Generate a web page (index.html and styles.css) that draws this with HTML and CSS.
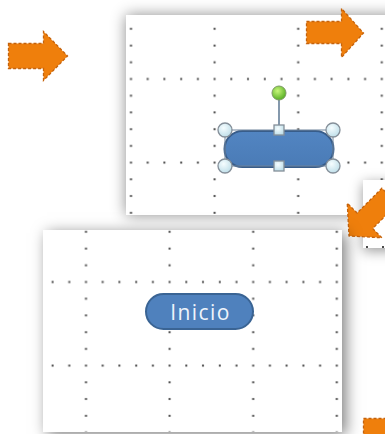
FILE: index.html
```html
<!DOCTYPE html>
<html lang="es">
<head>
    <meta charset="UTF-8">
    <meta name="viewport" content="width=device-width, initial-scale=1.0">
    <title>Diapositivas - Inicio</title>
    <link rel="stylesheet" href="styles.css">
</head>
<body>
    <div class="canvas">
        <!-- flecha izquierda -->
        <svg class="arrow arrow-left" width="62" height="52" viewBox="-1.5 -1.5 62 52">
            <path class="arrow-shape" d="M0 12 H35 V0 L59 24.5 L35 49 V37 H0 Z"/>
        </svg>

        <!-- diapositiva 1: forma seleccionada -->
        <div class="slide slide-top">
            <svg class="grid" width="100%" height="100%">
                <defs>
                    <pattern id="dots1" patternUnits="userSpaceOnUse" width="83.6" height="83.6" x="3.5" y="62.5">
                        <rect class="pt" x="0.5" y="0.5" width="2" height="2"/>
                        <rect class="pt" x="0.5" y="17.2" width="2" height="2"/>
                        <rect class="pt" x="0.5" y="33.9" width="2" height="2"/>
                        <rect class="pt" x="0.5" y="50.7" width="2" height="2"/>
                        <rect class="pt" x="0.5" y="67.4" width="2" height="2"/>
                        <rect class="pt" x="17.2" y="0.5" width="2" height="2"/>
                        <rect class="pt" x="33.9" y="0.5" width="2" height="2"/>
                        <rect class="pt" x="50.7" y="0.5" width="2" height="2"/>
                        <rect class="pt" x="67.4" y="0.5" width="2" height="2"/>
                    </pattern>
                    <radialGradient id="handle" cx="40%" cy="35%" r="70%">
                        <stop offset="0" stop-color="#f6fdff"/>
                        <stop offset="1" stop-color="#bcdde8"/>
                    </radialGradient>
                    <radialGradient id="rotate" cx="40%" cy="35%" r="70%">
                        <stop offset="0" stop-color="#c8f77a"/>
                        <stop offset="1" stop-color="#4faa1e"/>
                    </radialGradient>
                    <linearGradient id="pillFill" x1="0" y1="0" x2="0" y2="1">
                        <stop offset="0" stop-color="#5285c2"/>
                        <stop offset="1" stop-color="#4a7bb6"/>
                    </linearGradient>
                </defs>
                <rect width="100%" height="100%" fill="url(#dots1)"/>
            </svg>

            <svg class="selection" width="135" height="90" viewBox="0 0 135 90">
                <rect class="pill" x="14.5" y="46" width="109" height="36" rx="18"/>
                <rect class="frame" x="15" y="45" width="108" height="36"/>
                <line class="stem" x1="69" y1="15" x2="69" y2="41"/>
                <circle class="rot-handle" cx="69" cy="8" r="7"/>
                <circle class="handle" cx="15" cy="45" r="7"/>
                <circle class="handle" cx="123" cy="45" r="7"/>
                <circle class="handle" cx="15" cy="81" r="7"/>
                <circle class="handle" cx="123" cy="81" r="7"/>
                <rect class="handle" x="64" y="40" width="10" height="10"/>
                <rect class="handle" x="64" y="76" width="10" height="10"/>
            </svg>
        </div>

        <!-- diapositiva 3 (detrás) -->
        <div class="slide slide-back">
            <span class="dot dot-a"></span>
            <span class="dot dot-b"></span>
        </div>

        <svg class="arrow arrow-top" width="60" height="52" viewBox="-1.5 -1.5 60 52">
            <path class="arrow-shape" d="M0 13 H35 V0 L57 24.5 L35 49 V35 H0 Z"/>
        </svg>

        <svg class="arrow arrow-diag" width="60" height="80" viewBox="0 0 60 80">
            <path class="arrow-shape" transform="translate(4 50) rotate(135) translate(-57 -24.5)" d="M0 13 H35 V0 L57 24.5 L35 49 V35 H0 Z"/>
        </svg>

        <!-- diapositiva 2: resultado -->
        <div class="slide slide-bottom">
            <svg class="grid" width="100%" height="100%">
                <defs>
                    <pattern id="dots2" patternUnits="userSpaceOnUse" width="83.6" height="83.6" x="41.5" y="50.5">
                        <rect class="pt" x="0.5" y="0.5" width="2" height="2"/>
                        <rect class="pt" x="0.5" y="17.2" width="2" height="2"/>
                        <rect class="pt" x="0.5" y="33.9" width="2" height="2"/>
                        <rect class="pt" x="0.5" y="50.7" width="2" height="2"/>
                        <rect class="pt" x="0.5" y="67.4" width="2" height="2"/>
                        <rect class="pt" x="17.2" y="0.5" width="2" height="2"/>
                        <rect class="pt" x="33.9" y="0.5" width="2" height="2"/>
                        <rect class="pt" x="50.7" y="0.5" width="2" height="2"/>
                        <rect class="pt" x="67.4" y="0.5" width="2" height="2"/>
                    </pattern>
                </defs>
                <rect width="100%" height="100%" fill="url(#dots2)"/>
            </svg>
            <div class="btn-inicio">Inicio</div>
        </div>

        <svg class="arrow arrow-bottom" width="40" height="30" viewBox="-1.5 -1.5 40 30">
            <path class="arrow-shape" d="M0 0 H40 V30 H0 Z"/>
        </svg>
    </div>
</body>
</html>
```

FILE: styles.css
```css
body {
    margin: 0;
    background-color: #ffffff;
    font-family: "Open Sans", "Liberation Sans", sans-serif;
}
.canvas {
    position: relative;
    width: 385px;
    height: 434px;
    overflow: hidden;
    background-color: #ffffff;
}
.slide {
    position: absolute;
    background-color: #ffffff;
}
.slide-top {
    left: 126px;
    top: 15px;
    width: 290px;
    height: 200px;
    box-shadow: 0 0 14px rgba(0, 0, 0, 0.45);
}
.slide-back {
    left: 363px;
    top: 180px;
    width: 40px;
    height: 68px;
    box-shadow: 0 3px 12px rgba(0, 0, 0, 0.4);
}
.slide-bottom {
    left: 43px;
    top: 230px;
    width: 299px;
    height: 202px;
    box-shadow: 4px 3px 14px rgba(0, 0, 0, 0.5);
}
.grid {
    position: absolute;
    left: 0;
    top: 0;
}
.pt {
    fill: #4a4a4a;
}
.dot {
    position: absolute;
    top: 66px;
    width: 2px;
    height: 2px;
    background-color: #4a4a4a;
}
.dot-a { left: 3px; }
.dot-b { left: 19px; }

.selection {
    position: absolute;
    left: 84px;
    top: 70px;
}
.pill {
    fill: url(#pillFill);
    stroke: #385d8a;
    stroke-width: 2;
}
.frame {
    fill: none;
    stroke: #6f849b;
    stroke-width: 1;
}
.stem {
    stroke: #667f98;
    stroke-width: 1.6;
}
.handle {
    fill: url(#handle);
    stroke: #858f99;
    stroke-width: 1.3;
}
.rot-handle {
    fill: url(#rotate);
    stroke: #7e9a66;
    stroke-width: 1;
}

.btn-inicio {
    position: absolute;
    left: 102px;
    top: 63px;
    width: 109px;
    height: 37px;
    box-sizing: border-box;
    border: 2px solid #3a6494;
    border-radius: 19px;
    background-color: #4f81bd;
    color: #eef4fb;
    font-size: 21px;
    letter-spacing: 1.4px;
    display: flex;
    align-items: center;
    justify-content: center;
    padding-left: 2px;
}

.arrow {
    position: absolute;
    overflow: visible;
}
.arrow-shape {
    fill: #ef7f0c;
    stroke: #c4620c;
    stroke-width: 1.3;
    stroke-dasharray: 3 2;
}
.arrow-left {
    left: 6.5px;
    top: 29.5px;
}
.arrow-top {
    left: 304.5px;
    top: 6.5px;
}
.arrow-diag {
    left: 345px;
    top: 186px;
}
.arrow-bottom {
    left: 361.5px;
    top: 416.5px;
}
```
